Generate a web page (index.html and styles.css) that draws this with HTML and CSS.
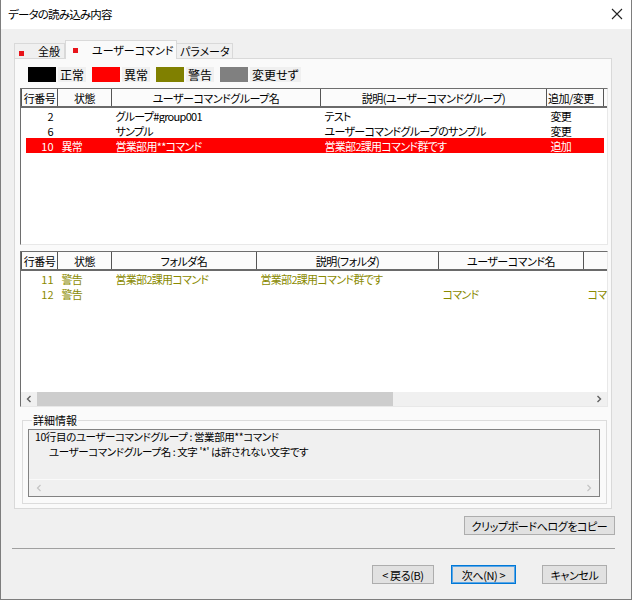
FILE: index.html
```html
<!DOCTYPE html>
<html lang="ja">
<head>
<meta charset="utf-8">
<title>データの読み込み内容</title>
<link rel="stylesheet" href="styles.css">
</head>
<body>
<div class="window">
  <div class="titlebar">
    <span class="title">データの読み込み内容</span>
    <svg class="close" width="12" height="12" viewBox="0 0 12 12"><path d="M1 1 L11 11 M11 1 L1 11" stroke="#222" stroke-width="1.1" fill="none"/></svg>
  </div>
  <div class="body">
    <div class="tabs">
      <div class="tab t1"><span class="mark"></span><span class="tlabel">全般</span></div>
      <div class="tab t2 active"><span class="mark"></span><span class="tlabel">ユーザーコマンド</span></div>
      <div class="tab t3"><span class="tlabel">パラメータ</span></div>
    </div>
    <div class="panel">
      <div class="legend">
        <div class="item"><span class="swatch black"></span><span class="lab">正常</span></div>
        <div class="item"><span class="swatch red"></span><span class="lab">異常</span></div>
        <div class="item"><span class="swatch olive"></span><span class="lab">警告</span></div>
        <div class="item"><span class="swatch gray"></span><span class="lab">変更せず</span></div>
      </div>

      <div class="grid grid1">
        <table>
          <colgroup><col class="c-no"><col class="c-st"><col style="width:209px"><col style="width:226px"><col style="width:57px"><col></colgroup>
          <thead><tr><th>行番号</th><th>状態</th><th>ユーザーコマンドグループ名</th><th>説明(ユーザーコマンドグループ)</th><th class="lefth">追加/変更</th><th class="fill"></th></tr></thead>
          <tbody>
            <tr><td class="num">2</td><td></td><td>グループ#group001</td><td>テスト</td><td>変更</td><td></td></tr>
            <tr><td class="num">6</td><td></td><td>サンプル</td><td>ユーザーコマンドグループのサンプル</td><td>変更</td><td></td></tr>
            <tr class="err"><td class="num first">10</td><td>異常</td><td>営業部用**コマンド</td><td>営業部2課用コマンド群です</td><td>追加</td><td class="nobg"></td></tr>
          </tbody>
        </table>
      </div>

      <div class="grid grid2">
        <div class="gbody">
          <table>
            <colgroup><col class="c-no"><col class="c-st"><col style="width:145px"><col style="width:182px"><col style="width:145px"><col></colgroup>
            <thead><tr><th>行番号</th><th>状態</th><th>フォルダ名</th><th>説明(フォルダ)</th><th>ユーザーコマンド名</th><th class="fill2"></th></tr></thead>
            <tbody>
              <tr class="warn"><td class="num">11</td><td>警告</td><td>営業部2課用コマンド</td><td>営業部2課用コマンド群です</td><td></td><td></td></tr>
              <tr class="warn"><td class="num">12</td><td>警告</td><td></td><td></td><td>コマンド</td><td class="clip">コマン</td></tr>
            </tbody>
          </table>
        </div>
        <div class="hscroll">
          <span class="arrow"><svg width="8" height="8" viewBox="0 0 8 8"><path d="M5.5 1 L2.5 4 L5.5 7" stroke="#606060" stroke-width="1.4" fill="none"/></svg></span>
          <div class="track"><div class="thumb"></div></div>
          <span class="arrow"><svg width="8" height="8" viewBox="0 0 8 8"><path d="M2.5 1 L5.5 4 L2.5 7" stroke="#606060" stroke-width="1.4" fill="none"/></svg></span>
        </div>
      </div>

      <fieldset class="group">
        <legend>詳細情報</legend>
        <div class="memo">
          <div class="memotext">
            <div>10行目のユーザーコマンドグループ : 営業部用**コマンド</div>
            <div class="indent">ユーザーコマンドグループ名 : 文字 '*' は許されない文字です</div>
          </div>
          <div class="mscroll">
            <svg width="8" height="8" viewBox="0 0 8 8"><path d="M5.5 1 L2.5 4 L5.5 7" stroke="#c4c4c4" stroke-width="1.2" fill="none"/></svg>
            <svg width="8" height="8" viewBox="0 0 8 8"><path d="M2.5 1 L5.5 4 L2.5 7" stroke="#c4c4c4" stroke-width="1.2" fill="none"/></svg>
          </div>
        </div>
      </fieldset>
    </div>

    <div class="copyrow"><button class="btn copy">クリップボードへログをコピー</button></div>
    <div class="sep"></div>
    <div class="buttons">
      <button class="btn back">&lt; 戻る(B)</button>
      <button class="btn next">次へ(N) &gt;</button>
      <button class="btn cancel">キャンセル</button>
    </div>
  </div>
</div>
</body>
</html>
```
FILE: styles.css
```css
* { box-sizing: border-box; }
html, body { margin: 0; padding: 0; }
body {
  width: 632px;
  height: 600px;
  background: #f0f0f0;
  font-family: "Noto Sans CJK JP", "Noto Sans", sans-serif;
  font-size: 11px;
  font-feature-settings: "palt";
  color: #000;
  overflow: hidden;
}
.window {
  width: 632px;
  height: 600px;
  border-left: 1px solid #7d7d7d;
  border-right: 1px solid #7d7d7d;
  border-bottom: 1px solid #7d7d7d;
  background: #f0f0f0;
}
.titlebar {
  height: 29px;
  background: #fff;
  display: flex;
  align-items: center;
  justify-content: space-between;
  padding: 0 8px 0 7px;
}
.title { font-size: 11.5px; line-height: 14px; margin-top: -2px; letter-spacing: -0.8px; }
.close { margin-top: -2px; }

.body { padding: 11px 0 0 13px; }

.tabs { display: flex; align-items: flex-end; height: 18px; }
.tab {
  height: 15px;
  border: 1px solid #d9d9d9;
  border-bottom: none;
  background: #f0f0f0;
  display: flex;
  align-items: center;
  position: relative;
  line-height: 12px;
  white-space: nowrap;
}
.t1 { width: 51px; padding-left: 4px; }
.t1 .tlabel { margin-left: 14px; }
.t2 { width: 112px; padding-left: 7px; }
.t2 .tlabel { margin-left: 14px; }
.t3 { width: 56px; padding-left: 3px; border-left: none; }
.tab.active {
  height: 19px;
  margin-bottom: -1px;
  background: #fafafa;
  z-index: 1;
}
.mark { width: 5px; height: 5px; background: #e8141a; margin-top: 4px; flex: none; }
.t2 .mark { margin-top: 0; }

.panel {
  width: 598px;
  height: 451px;
  border: 1px solid #d9d9d9;
  background: #fafafa;
  padding: 8px 0 0 5px;
}

.legend { display: flex; margin-left: 8px; height: 15px; gap: 6px; }
.item { display: flex; align-items: center; }
.swatch { width: 28px; height: 15px; }
.swatch.black { background: #000; }
.swatch.red { background: #ff0000; }
.swatch.olive { background: #808000; }
.swatch.gray { background: #808080; }
.lab { margin-left: 2px; padding: 0 2px; height: 15px; line-height: 15px; background: #f0f0f0; font-size: 12px; }

.grid {
  width: 588px;
  background: #fff;
  border-left: 1px solid #6e6e6e;
  border-top: 1px solid #6e6e6e;
  border-right: 1px solid #e8e8e8;
  border-bottom: 1px solid #e8e8e8;
  overflow: hidden;
}
.grid1 { height: 157px; margin-top: 6px; }
.grid2 { height: 156px; margin-top: 6px; display: flex; flex-direction: column; }
.gbody { flex: 1; overflow: hidden; }

table { border-collapse: collapse; table-layout: fixed; width: 586px; }
col.c-no { width: 36px; }
col.c-st { width: 54px; }
th {
  height: 18px;
  padding: 0;
  font-weight: normal;
  font-size: 11px;
  letter-spacing: -0.5px;
  background: #fbfbfb;
  border-right: 1px solid #555;
  border-bottom: 2px solid #6a6a6a;
  text-align: center;
  white-space: nowrap;
  overflow: hidden;
  line-height: 16px;
}
th:first-child { border-left: 1px solid #555; }
th.lefth { text-align: left; padding-left: 1px; }
th.fill { border-right: none; }
th.fill2 { border-right: none; }
td {
  height: 15px;
  padding: 0 0 0 4px;
  white-space: nowrap;
  overflow: hidden;
  line-height: 14px;
  font-size: 11px;
  letter-spacing: -0.7px;
}
td.num { text-align: right; padding: 0 4px 0 0; letter-spacing: 0; }
tr.err td { background: #ff0000; color: #fff; }
tr.err td.first { background: linear-gradient(to right, #fff 4px, #ff0000 4px); }
tr.err td.nobg { background: #fff; }
tbody tr:first-child td { padding-top: 1px; }
tr.warn td { color: #8a8a00; }
td.clip { padding-left: 4px; text-overflow: clip; }

.hscroll { height: 14px; display: flex; align-items: center; background: #f0f0f0; }
.arrow { width: 16px; height: 14px; display: flex; align-items: center; justify-content: center; }
.track { flex: 1; height: 14px; }
.thumb { width: 356px; height: 14px; background: #cdcdcd; }

.group {
  margin: 7px 0 0 2px;
  width: 585px;
  height: 90px;
  padding: 0 0 0 5px;
  border: 1px solid #dcdcdc;
}
.group legend {
  padding: 0 1px;
  margin-left: 4px;
  font-size: 11px;
  line-height: 12px;
}
.memo {
  margin-top: 3px;
  width: 572px;
  height: 68px;
  border: 1px solid #828282;
  background: #f0f0f0;
  display: flex;
  flex-direction: column;
  justify-content: space-between;
}
.memotext { padding: 0 0 0 6px; line-height: 15px; font-size: 10.5px; letter-spacing: -0.4px; margin-top: -1px; }
.memotext .indent { padding-left: 14px; }
.mscroll {
  height: 17px;
  border-top: 1px solid #fafafa;
  display: flex;
  align-items: center;
  justify-content: space-between;
  padding: 0 6px 0 6px;
}

.copyrow { width: 601px; display: flex; justify-content: flex-end; margin-top: 7px; }
.btn {
  font-family: "Noto Sans CJK JP", "Noto Sans", sans-serif;
  font-feature-settings: "palt";
  font-size: 11px;
  letter-spacing: -0.4px;
  background: #e1e1e1;
  border: 1px solid #adadad;
  padding: 0;
  margin: 0;
  height: 19px;
  line-height: 16px;
  color: #000;
}
.copy { width: 151px; }
.sep { margin: 13px 0 0 -2px; width: 603px; height: 1px; background: #a0a0a0; }
.buttons { display: flex; width: 601px; justify-content: flex-end; margin-top: 16px; padding-right: 8px; }
.back { width: 62px; }
.next { width: 65px; margin-left: 17px; border-color: #0078d7; box-shadow: inset 0 0 0 1px #5aa6e6; }
.cancel { width: 65px; margin-left: 26px; }
```
